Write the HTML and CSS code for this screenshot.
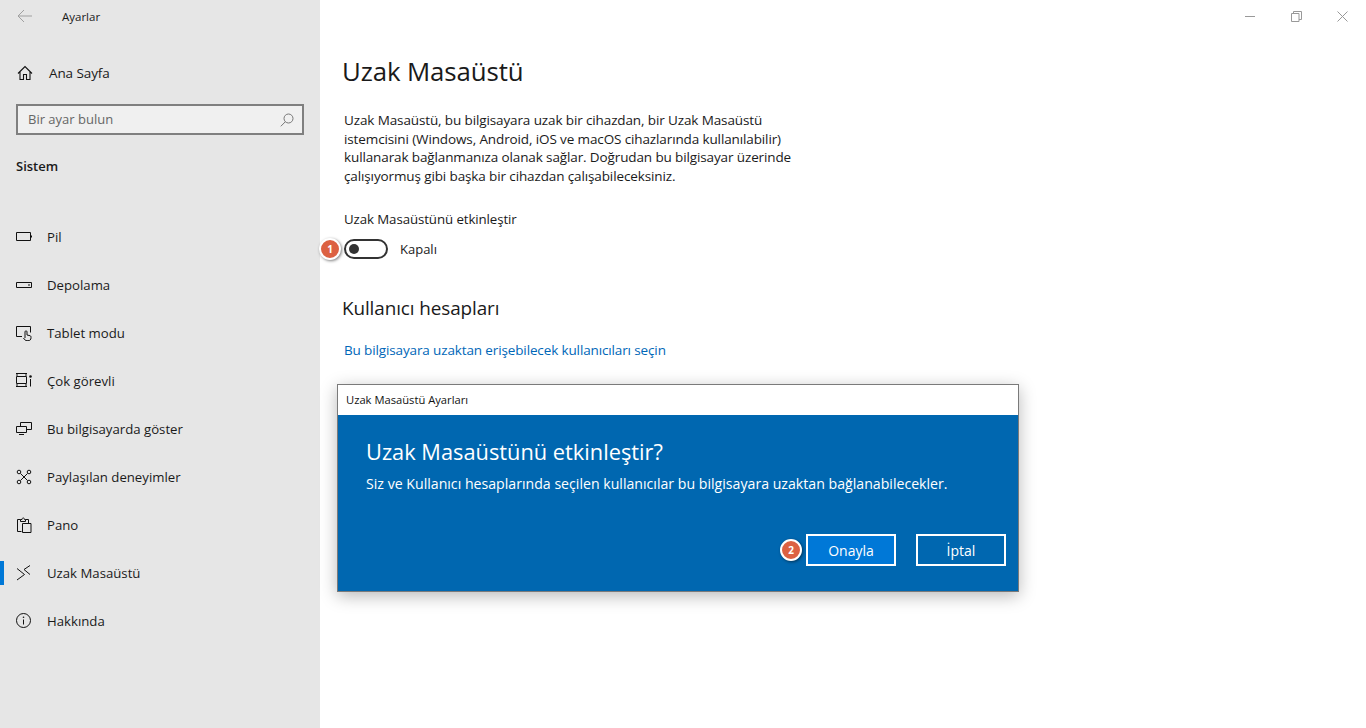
FILE: index.html
```html
<!DOCTYPE html>
<html lang="tr">
<head>
<meta charset="utf-8">
<title>Ayarlar</title>
<link rel="stylesheet" href="styles.css">
</head>
<body>
<div class="app">
  <aside class="sidebar">
    <div class="topbar">
      <svg class="back" width="16" height="14" viewBox="0 0 16 14"><path d="M7 1 1 7l6 6M1 7h14" fill="none" stroke="#a0a0a0" stroke-width="1"/></svg>
      <span class="apptitle">Ayarlar</span>
    </div>
    <div class="home">
      <svg class="icon" width="16" height="16" viewBox="0 0 16 16"><path d="M1 8.500 8 1.500l7 7M3 7v7.500h3.500V9.500h3v5H13V7" fill="none" stroke="#111" stroke-width="1.100"/></svg>
      <span>Ana Sayfa</span>
    </div>
    <div class="search">
      <span class="stext">Bir ayar bulun</span>
      <svg width="14" height="14" viewBox="0 0 14 14"><circle cx="8.500" cy="5.500" r="4.500" fill="none" stroke="#777"/><path d="M5.300 8.800.8 13.300" stroke="#777" fill="none"/></svg>
    </div>
    <div class="section">Sistem</div>
    <nav class="nav">
      <div class="item"><svg class="icon" width="16" height="16" viewBox="0 0 16 16"><path d="M.5 3.500h14v8H.5zM15.500 6.500v2" fill="none" stroke="#111"/></svg><span>Pil</span></div>
      <div class="item"><svg class="icon" width="16" height="16" viewBox="0 0 16 16"><path d="M.5 5.500h15v5H.5zM12 8h2" fill="none" stroke="#111"/></svg><span>Depolama</span></div>
      <div class="item"><svg class="icon" width="16" height="16" viewBox="0 0 16 16"><path d="M6 11.500H.5v-10h14v6M9 13V6.800c0-1.300 2-1.300 2 0V10l3 .7c1 .3 1 1 1 2 0 2-1 3-3 3h-1c-1.500 0-2.500-1-3.500-2.700" fill="none" stroke="#111"/></svg><span>Tablet modu</span></div>
      <div class="item"><svg class="icon" width="16" height="16" viewBox="0 0 16 16"><path d="M0 .5h11M0 13.500h11M1 .5v2.500M10 .5v2.500M1 13.500V11M10 13.500V11M.5 3.500h10v7H.5zM14.500 6v7.500" fill="none" stroke="#111"/><circle cx="14.500" cy="3.500" r="1.300" fill="#111"/></svg><span>Çok görevli</span></div>
      <div class="item"><svg class="icon" width="16" height="16" viewBox="0 0 16 16"><path d="M4.500 5V1.500h11v7H11M.5 5.500h10v6H.5zM3 13.500h5" fill="none" stroke="#111"/></svg><span>Bu bilgisayarda göster</span></div>
      <div class="item"><svg class="icon" width="16" height="16" viewBox="0 0 16 16"><g fill="none" stroke="#111"><circle cx="3" cy="3" r="1.800"/><circle cx="13" cy="3" r="1.800"/><circle cx="3" cy="13" r="1.800"/><circle cx="13" cy="13" r="1.800"/><path d="M4.500 4.500l7 7M11.500 4.500l-7 7"/></g></svg><span>Paylaşılan deneyimler</span></div>
      <div class="item"><svg class="icon" width="16" height="16" viewBox="0 0 16 16"><path d="M5.500 14.500h-4V2.500h3M9.500 2.500h3V6M4.500 4.500v-2h1.500c0-2 2.500-2 2.500 0h1v2zM6.500 6.500h8.500v9H6.500z" fill="none" stroke="#111"/></svg><span>Pano</span></div>
      <div class="item active"><svg class="icon" width="16" height="16" viewBox="0 0 16 16"><path d="M1 3.500l7.500 6L1 15M14 .5 8 4.500l6 5" fill="none" stroke="#111"/></svg><span>Uzak Masaüstü</span></div>
      <div class="item"><svg class="icon" width="16" height="16" viewBox="0 0 16 16"><circle cx="7.500" cy="7.500" r="7" fill="none" stroke="#111"/><path d="M7.500 6.500v5" stroke="#111" fill="none"/><circle cx="7.500" cy="4.300" r=".8" fill="#111"/></svg><span>Hakkında</span></div>
    </nav>
  </aside>
  <main class="main">
    <div class="winctrl">
      <svg width="11" height="11" viewBox="0 0 11 11"><path d="M0 5.500h10" stroke="#999" fill="none"/></svg>
      <svg width="11" height="11" viewBox="0 0 11 11"><path d="M.5 2.500h7.500v8H.5zM2.500 2.500V.5h8v8H8" stroke="#999" fill="none"/></svg>
      <svg width="11" height="11" viewBox="0 0 11 11"><path d="M.5.500l10 10M10.500.5l-10 10" stroke="#999" fill="none"/></svg>
    </div>
    <h1 class="pagetitle">Uzak Masaüstü</h1>
    <p class="desc">Uzak Masaüstü, bu bilgisayara uzak bir cihazdan, bir Uzak Masaüstü<br>istemcisini (Windows, Android, iOS ve macOS cihazlarında kullanılabilir)<br>kullanarak bağlanmanıza olanak sağlar. Doğrudan bu bilgisayar üzerinde<br>çalışıyormuş gibi başka bir cihazdan çalışabileceksiniz.</p>
    <div class="tlabel">Uzak Masaüstünü etkinleştir</div>
    <div class="trow">
      <div class="toggle"><span class="knob"></span><span class="marker m1">1</span></div>
      <span>Kapalı</span>
    </div>
    <h2 class="subtitle">Kullanıcı hesapları</h2>
    <a class="link" href="#">Bu bilgisayara uzaktan erişebilecek kullanıcıları seçin</a>
  </main>
</div>
<div class="dialog">
  <div class="dtitle"><span class="dtitletext">Uzak Masaüstü Ayarları</span></div>
  <div class="dbody">
    <div class="dhead">Uzak Masaüstünü etkinleştir?</div>
    <div class="dtext">Siz ve Kullanıcı hesaplarında seçilen kullanıcılar bu bilgisayara uzaktan bağlanabilecekler.</div>
    <div class="dbtns">
      <button class="btn primary" type="button">Onayla<span class="marker m2">2</span></button>
      <button class="btn" type="button">İptal</button>
    </div>
  </div>
</div>
</body>
</html>
```

FILE: styles.css
```css
* { box-sizing: border-box; }
html, body { margin: 0; height: 100%; }
body {
  font-family: "Open Sans", "Noto Sans", sans-serif;
  font-size: 13px;
  color: #1a1a1a;
  background: #fff;
  overflow: hidden;
}
.app { display: flex; height: 728px; }
.sidebar { width: 320px; flex: none; background: #e6e6e6; display: flex; flex-direction: column; }
.topbar { height: 33px; display: flex; align-items: center; padding-left: 17px; }
.back { flex: none; margin-top: -2px; }
.apptitle { margin-left: 29px; font-size: 11.5px; }
.home { height: 48px; margin-top: 16px; display: flex; align-items: center; padding-left: 17px; gap: 16px; }
.home span { font-size: 13.5px; letter-spacing: -.1px; }
.icon { flex: none; }
.search {
  margin: 7px 16px 0; height: 31px; border: 2px solid #7f7f7f; background: #f0f0f0;
  display: flex; align-items: center; justify-content: space-between; padding: 0 8px 0 10px; color: #666;
}
.stext { margin-top: -2px; }
.section { margin: 22px 0 0 16px; font-weight: 600; font-size: 13px; line-height: 18px; height: 18px; }
.nav { margin-top: 38px; font-size: 13.2px; }
.item { height: 48px; display: flex; align-items: center; gap: 15px; padding-left: 16px; position: relative; }
.item.active::before { content: ""; position: absolute; left: 0; top: 12px; width: 4px; height: 24px; background: #0078d7; }
.main { flex: 1; position: relative; padding: 0 0 0 22px; }
.winctrl { position: absolute; top: 11px; right: 18px; display: flex; gap: 35px; }
.pagetitle { margin: 52px 0 0; font-size: 25.800px; font-weight: 400; line-height: 38px; letter-spacing: -.1px; }
.desc { margin: 21px 0 0 2px; line-height: 18.700px; font-size: 13.5px; letter-spacing: -.12px; }
.tlabel { margin: 24px 0 0 2px; line-height: 19px; font-size: 13.300px; letter-spacing: -.1px; }
.trow { margin: 10px 0 0 2px; display: flex; align-items: center; gap: 12px; height: 20px; }
.toggle { width: 44px; height: 20px; border: 2px solid #333; border-radius: 10px; position: relative; }
.knob { position: absolute; left: 3px; top: 3px; width: 10px; height: 10px; border-radius: 50%; background: #333; }
.marker {
  position: absolute; width: 22px; height: 22px; border-radius: 50%; background: #dc6142; border: 2px solid #fff;
  color: #fff; font-size: 10px; font-weight: 700; display: flex; align-items: center; justify-content: center;
  box-shadow: 1px 1px 3px rgba(0,0,0,.5);
}
.m1 { left: -27px; top: -3px; }
.m2 { left: -28px; top: 3px; }
.subtitle { margin: 36px 0 0; font-size: 18.900px; font-weight: 400; line-height: 26px; letter-spacing: -.1px; }
.link { display: block; margin: 20px 0 0 2px; color: #0067b8; font-size: 13.500px; text-decoration: none; line-height: 19px; letter-spacing: -.13px; }
.dialog {
  position: absolute; left: 337px; top: 384px; width: 682px; height: 208px; border: 1px solid #7a7a7a;
  box-shadow: 0 4px 16px rgba(0,0,0,.28); display: flex; flex-direction: column;
}
.dtitle { height: 30px; background: #fff; display: flex; align-items: center; padding-left: 8px; font-size: 11.200px; color: #111; flex: none; }
.dtitletext { margin-top: -2px; }
.dbody { flex: 1; background: #0067b0; color: #fff; padding: 21px 12px 0 28px; }
.dhead { font-size: 21.800px; line-height: 32px; }
.dtext { margin-top: 6px; font-size: 14.150px; line-height: 20px; }
.dbtns { display: flex; justify-content: flex-end; gap: 20px; margin-top: 40px; }
.btn {
  width: 90px; height: 32px; border: 2px solid #fff; background: transparent; color: #fff; font: inherit; font-size: 14px;
  position: relative; padding: 0;
}
.btn.primary { background: #0078d7; }
```
